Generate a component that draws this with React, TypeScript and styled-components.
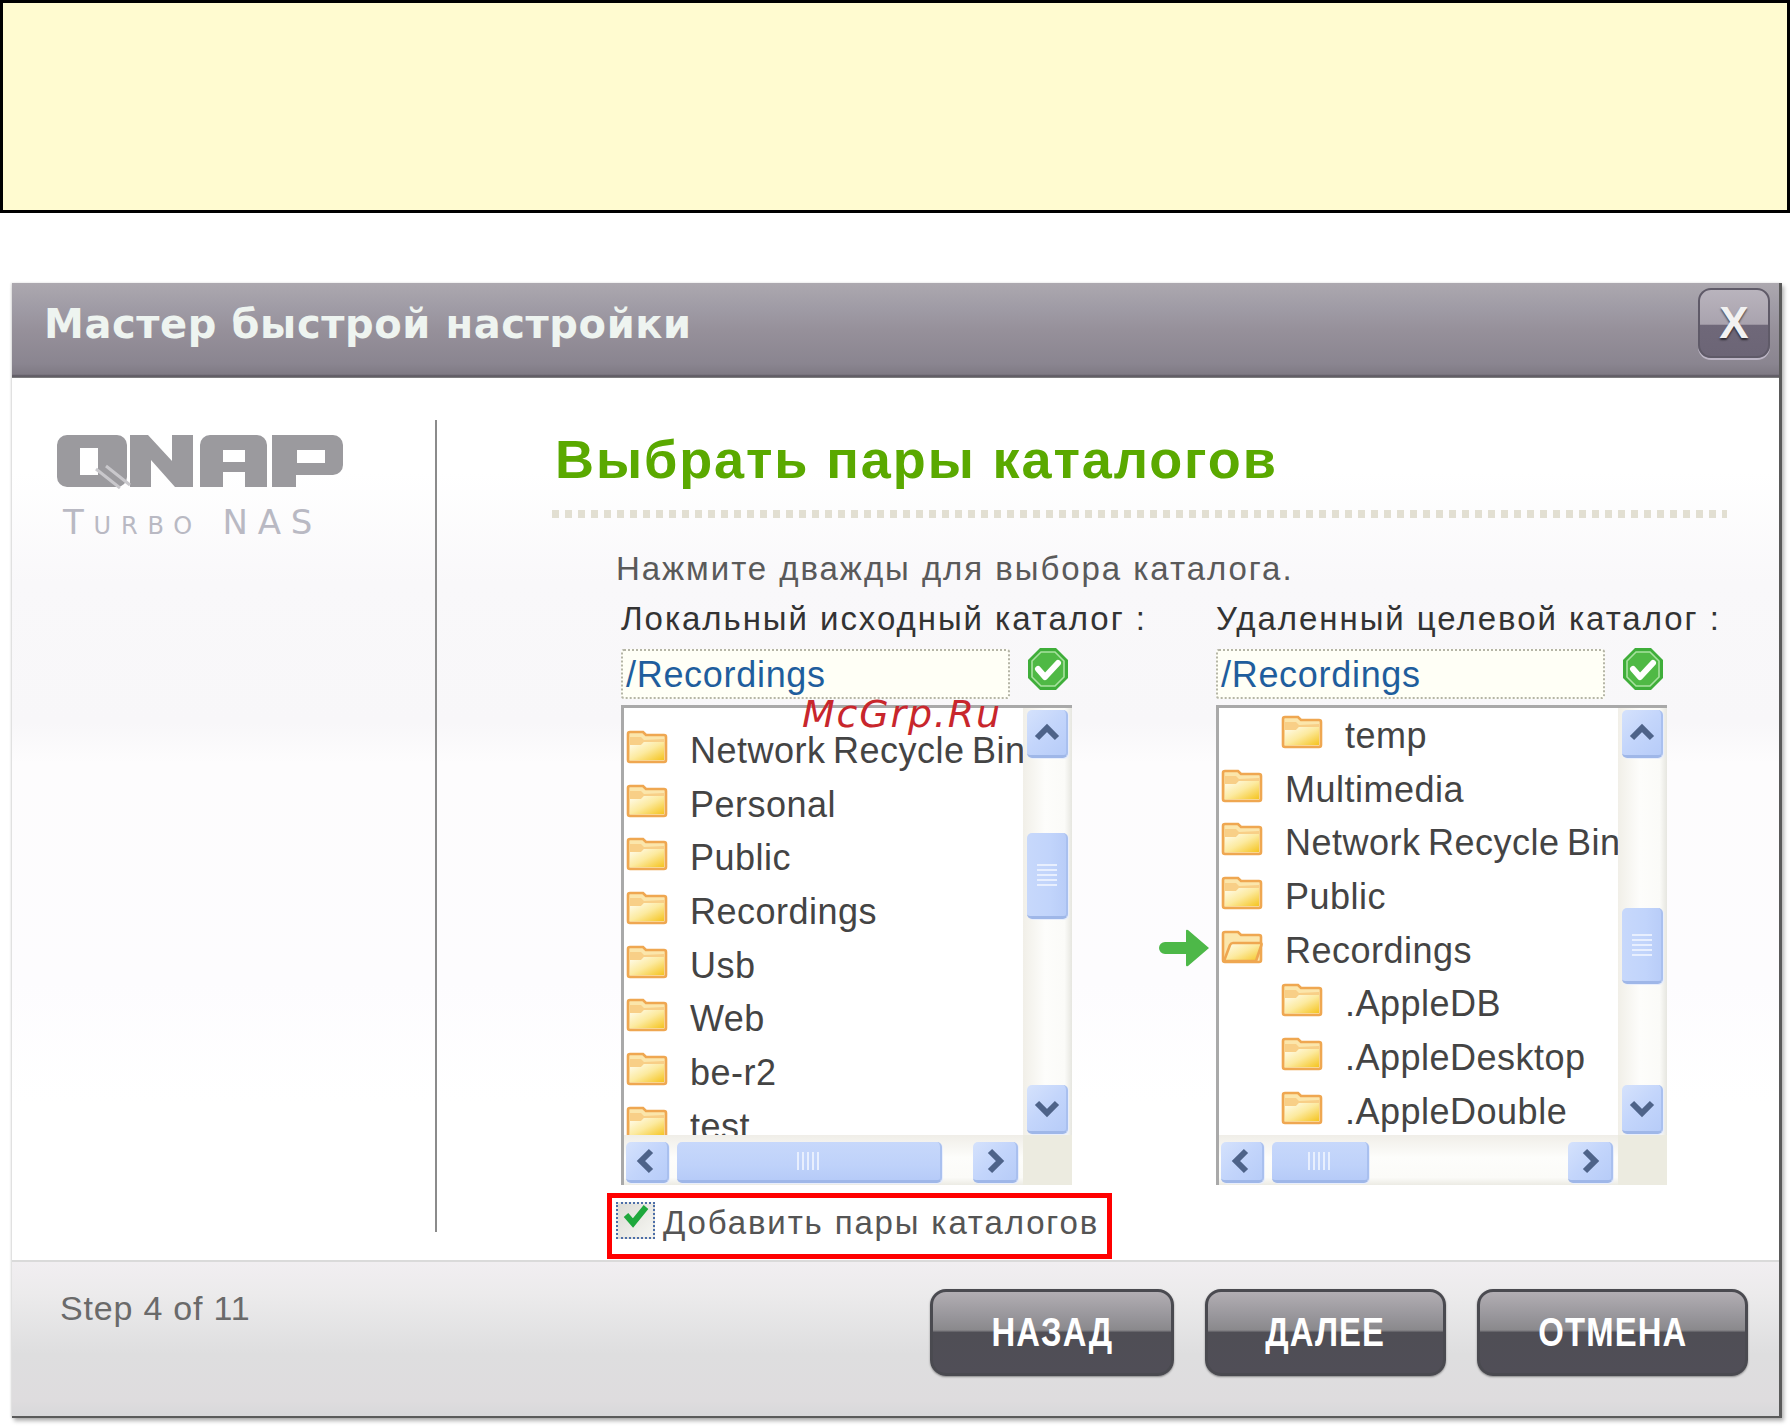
import React from "react";
import styled, { createGlobalStyle } from "styled-components";

const Global = createGlobalStyle`
  html, body { margin: 0; padding: 0; background: #fff; }
  body { font-family: "Liberation Sans", Arial, sans-serif; }
  #root { width: 1790px; height: 1427px; overflow: hidden; }
`;

const Page = styled.div`
  position: relative;
  width: 1790px;
  height: 1427px;
`;

const Note = styled.div`
  box-sizing: border-box;
  height: 213px;
  background: #fffbd0;
  border: 3px solid #000;
  margin-bottom: 70px;
`;

const Dialog = styled.div`
  box-sizing: border-box;
  margin: 0 8px 0 12px;
  height: 1135px;
  display: flex;
  flex-direction: column;
  border-right: 3px solid #5a5a5a;
  border-bottom: 2px solid #5a5a5a;
  box-shadow: 2px 3px 4px rgba(0, 0, 0, 0.3), -1px 0 2px rgba(0, 0, 0, 0.12);
  background: linear-gradient(
    180deg,
    #fff 0,
    #fff 190px,
    #f9f8fa 300px,
    #f8f7f9 440px,
    #fdfcfd 480px,
    #fdfcfe 700px,
    #fff 820px
  );
`;

const TitleBar = styled.div`
  box-sizing: border-box;
  height: 95px;
  flex: none;
  display: flex;
  align-items: center;
  justify-content: space-between;
  padding: 0 9px 0 32px;
  background: linear-gradient(180deg, #aca8af 0, #a09ca6 25%, #96909a 50%, #8a8590 85%, #7f7a84 96%, #57535c 98%, #8a8a8a 100%);
`;

const Title = styled.h1`
  margin: 0 0 14px;
  font-family: "DejaVu Sans", sans-serif;
  font-weight: 700;
  font-size: 40px;
  letter-spacing: 0.6px;
  color: #eef4f0;
  white-space: nowrap;
`;

const CloseButton = styled.button`
  box-sizing: border-box;
  width: 72px;
  height: 70px;
  margin-top: -15px;
  padding: 0;
  border: 2px solid #5f5a68;
  border-radius: 13px;
  background: linear-gradient(180deg, #b9b4bd 0, #a9a3ae 52%, #6f6879 53%, #6c6576 100%);
  box-shadow: 0 2px 0 #bdb6c6;
  color: #f2f2f2;
  font-family: "Liberation Sans", sans-serif;
  font-weight: 700;
  font-size: 44px;
  line-height: 1;
  text-shadow: 0 2px 2px rgba(0, 0, 0, 0.6);
`;

const Body = styled.div`
  flex: 1;
  min-height: 0;
  display: flex;
  padding-top: 42px;
`;

const Sidebar = styled.aside`
  box-sizing: border-box;
  width: 423px;
  flex: none;
  padding: 15px 0 0 44px;
`;

const LogoText = styled.div`
  margin: 16px 0 0 7px;
  font-family: "DejaVu Sans", sans-serif;
  font-size: 34px;
  line-height: 34px;
  letter-spacing: 9.8px;
  color: #b9b9c3;
  white-space: nowrap;
  font-variant: small-caps;
`;

const Divider = styled.div`
  flex: none;
  width: 2px;
  height: 812px;
  background: #8b8b8b;
`;

const Content = styled.main`
  flex: 1;
  min-width: 0;
  padding: 11px 0 0 118px;
`;

const Heading = styled.h2`
  margin: 0;
  height: 60px;
  line-height: 56px;
  font-family: "Liberation Sans", sans-serif;
  font-weight: 700;
  font-size: 54px;
  letter-spacing: 1.9px;
  color: #5aa900;
  white-space: nowrap;
`;

const DottedRule = styled.div`
  height: 8px;
  margin: 19px 52px 31px -3px;
  background: repeating-linear-gradient(90deg, #e2dfd2 0, #e2dfd2 7px, transparent 7px, transparent 13px);
`;

const Inner = styled.div`
  padding-left: 61px;
`;

const Hint = styled.p`
  margin: 0;
  height: 40px;
  line-height: 40px;
  font-size: 33px;
  letter-spacing: 1.95px;
  color: #5a5a5a;
  white-space: nowrap;
`;

const Pairs = styled.div`
  display: grid;
  grid-template-columns: 451px 144px 451px;
  grid-template-rows: 55px 56px 480px;
  margin: 5px 0 0 5px;
`;

const FieldLabel = styled.div`
  line-height: 50px;
  font-size: 33px;
  letter-spacing: 1.95px;
  color: #333;
  white-space: nowrap;
`;

const PathRow = styled.div`
  grid-column: ${(p: { $col: number }) => p.$col};
  display: flex;
  align-items: flex-start;
  gap: 17px;
`;

const PathField = styled.div`
  box-sizing: border-box;
  width: 389px;
  height: 50px;
  padding-left: 3px;
  border: 2px dotted #b5b5a6;
  border-radius: 3px;
  background: #fffff6;
  line-height: 47px;
  font-size: 36px;
  letter-spacing: 0.7px;
  color: #1f5e9d;
`;

const ListBox = styled.div`
  box-sizing: border-box;
  height: 480px;
  display: grid;
  grid-template-columns: 1fr 49px;
  grid-template-rows: 1fr 50px;
  border-top: 3px solid #a9a9a9;
  border-left: 3px solid #a9a9a9;
  background: #fff;
`;

const Viewport = styled.div`
  overflow: hidden;
  min-width: 0;
`;

const Rows = styled.ul<{ $offset: number }>`
  list-style: none;
  margin: ${(p) => p.$offset}px 0 0;
  padding: 0;
`;

const Row = styled.li<{ $depth: number }>`
  display: flex;
  align-items: center;
  gap: 22px;
  height: 53.7px;
  padding-left: ${(p) => 2 + p.$depth * 60}px;
  font-size: 36px;
  letter-spacing: 0.5px;
  word-spacing: -3px;
  color: #444;
  white-space: nowrap;
`;

const VTrack = styled.div`
  display: flex;
  flex-direction: column;
  align-items: center;
  padding: 2px 0 1px;
  background: linear-gradient(90deg, #f1efe8 0, #fdfdfb 45%, #fbfbf8 85%, #e6e6e0 100%);
`;

const HTrack = styled.div<{ $thumb: number; $rest: number }>`
  display: grid;
  grid-template-columns: 43px ${(p) => p.$thumb}px 45px;
  justify-content: start;
  align-items: center;
  padding: 4px 0 0 2px;
  background: linear-gradient(180deg, #f0eee8 0, #fdfdfb 45%, #fbfbf8 85%, #ecebe4 100%);
  & > :nth-child(2) { margin-left: 8px; width: calc(100% - 8px); }
  & > :nth-child(3) { margin-left: ${(p) => p.$rest}px; }
`;

const Corner = styled.div`
  background: #ecebe0;
`;

const ScrollButton = styled.div<{ $w: number; $h: number }>`
  box-sizing: border-box;
  flex: none;
  display: flex;
  align-items: center;
  justify-content: center;
  width: ${(p) => p.$w}px;
  height: ${(p) => p.$h}px;
  border-radius: 5px;
  border-right: 2px solid #a9c0ef;
  border-bottom: 3px solid #9fb7e8;
  background: linear-gradient(135deg, #d5e2fc 0, #c3d5fb 50%, #b7ccf8 100%);
  box-shadow: 1px 1px 0 #e8eefc;
`;

const VSpace = styled.div`
  flex: 1;
  width: 100%;
  display: flex;
  flex-direction: column;
  align-items: center;
`;

const VThumb = styled(ScrollButton)<{ $top: number }>`
  margin-top: ${(p) => p.$top}px;
  background: linear-gradient(90deg, #c7d8fb 0, #c1d4fb 60%, #b9cdf8 100%);
`;

const HThumb = styled(ScrollButton)`
  background: linear-gradient(180deg, #c7d8fb 0, #bfd2fa 60%, #b6cbf8 100%);
`;

const Grip = styled.svg`
  display: block;
`;

const FolderIcon = styled.svg`
  flex: none;
  margin-top: -8px;
`;

const BadgeIcon = styled.svg`
  flex: none;
  margin-top: -2px;
`;

const ArrowCell = styled.div`
  justify-self: end;
  align-self: start;
  margin: 223px 5px 0 0;
`;

const ArrowIcon = styled.svg`
  display: block;
`;

const LogoIcon = styled.svg`
  display: block;
`;

const CheckRow = styled.label`
  box-sizing: border-box;
  display: flex;
  align-items: center;
  gap: 8px;
  width: 505px;
  height: 66px;
  margin: 8px 0 0 -9px;
  padding: 0 0 6px 8px;
  border: 5px solid #f00;
  font-size: 33px;
  letter-spacing: 1.85px;
  color: #555;
  white-space: nowrap;
`;

const CheckBox = styled.span`
  box-sizing: border-box;
  flex: none;
  display: flex;
  align-items: flex-start;
  justify-content: center;
  width: 39px;
  height: 37px;
  margin-top: -6px;
  margin-left: -4px;
  border: 2px dotted #4c6ea8;
  background: linear-gradient(135deg, #dcdcd6, #f6f6f2);
`;

const Footer = styled.footer`
  box-sizing: border-box;
  height: 156px;
  flex: none;
  display: flex;
  align-items: flex-start;
  padding: 27px 31px 0 48px;
  border-top: 2px solid #dadada;
  background: linear-gradient(180deg, #f1eef1 0, #ecebec 20%, #dededf 60%, #dedcde 90%, #d8d8da 100%);
`;

const StepText = styled.div`
  margin-top: -1px;
  flex: 1;
  font-size: 34px;
  line-height: 40px;
  letter-spacing: 0.8px;
  color: #6a6a6a;
`;

const NavButton = styled.button<{ $w: number; $ml: number }>`
  box-sizing: border-box;
  width: ${(p) => p.$w}px;
  height: 87px;
  margin-left: ${(p) => p.$ml}px;
  padding: 0;
  border: 3px solid #4a4a50;
  border-radius: 16px;
  background: linear-gradient(180deg, #b2aeb3 0, #98969b 30%, #8a898c 47%, #4f4e55 50%, #504e57 100%);
  box-shadow: 0 1px 2px #888;
  color: #fff;
  font-family: "Liberation Sans", sans-serif;
  font-weight: 700;
  font-size: 40px;
  letter-spacing: 1.4px;
`;

const NavLabel = styled.span`
  display: inline-block;
  transform: scaleX(0.82);
`;

const Watermark = styled.div`
  position: absolute;
  left: 802px;
  top: 691px;
  font-family: "DejaVu Sans", sans-serif;
  font-style: oblique;
  font-size: 38px;
  line-height: 46px;
  letter-spacing: 1.8px;
  color: #c8262c;
  white-space: nowrap;
`;

const Folder: React.FC<{ open?: boolean }> = ({ open }) => (
  <FolderIcon width="42" height="34" viewBox="0 0 42 34">
    <defs>
      <linearGradient id="foldFront" x1="0" y1="0" x2="1" y2="1">
        <stop offset="0" stopColor="#fffdf0" />
        <stop offset="0.5" stopColor="#fcea9f" />
        <stop offset="1" stopColor="#f5c41f" />
      </linearGradient>
    </defs>
    <path d="M2 30V4a2 2 0 0 1 2-2h13l3 3h18a2 2 0 0 1 2 2v23a2 2 0 0 1-2 2H4a2 2 0 0 1-2-2z" fill="#fbe6ab" stroke="#efa751" strokeWidth="2.6" />
    {open ? (
      <path d="M3 31l6-16q1-2 3-2h27q2 0 1.4 2L35 31z" fill="url(#foldFront)" stroke="#efa751" strokeWidth="2.6" strokeLinejoin="round" />
    ) : (
      <>
        <path d="M4 7h11l3 3 20-1v3H18l-3 3H4z" fill="#f8cf87" />
        <path d="M4 15h11l3-3h20v18H4z" fill="url(#foldFront)" />
      </>
    )}
  </FolderIcon>
);

const OkBadge = () => (
  <BadgeIcon width="42" height="44" viewBox="0 0 42 44">
    <path d="M13 1h16l12 12v18L29 43H13L1 31V13z" fill="#3fae3a" />
    <path d="M14 5h14l9 9v16l-9 9H14l-9-9V14z" fill="#4fb945" stroke="#a9e2a0" strokeWidth="1.6" />
    <path d="M11 22l7 8 13-14" fill="none" stroke="#fff" strokeWidth="6" strokeLinecap="round" strokeLinejoin="round" />
  </BadgeIcon>
);

const Chevron: React.FC<{ dir: "up" | "down" | "left" | "right" }> = ({ dir }) => {
  const d = { up: "M3 15L13 5l10 10", down: "M3 5l10 10L23 5", left: "M15 3L5 13l10 10", right: "M6 3l10 10L6 23" }[dir];
  const vertical = dir === "up" || dir === "down";
  return (
    <svg width={vertical ? 26 : 21} height={vertical ? 20 : 26} viewBox={vertical ? "0 0 26 20" : "0 0 21 26"}>
      <path d={d} fill="none" stroke="#4e6389" strokeWidth="6" />
    </svg>
  );
};

const HGrip = () => (
  <Grip width="24" height="18" viewBox="0 0 24 18">
    <path d="M1 0v18M6 0v18M11 0v18M16 0v18M21 0v18" stroke="#e8effe" strokeWidth="2" />
  </Grip>
);

const VGrip = () => (
  <Grip width="20" height="22" viewBox="0 0 20 22">
    <path d="M0 1h20M0 6h20M0 11h20M0 16h20M0 21h20" stroke="#e8effe" strokeWidth="2" />
  </Grip>
);

const Arrow = () => (
  <ArrowIcon width="52" height="40" viewBox="0 0 52 40">
    <path d="M6 14h21V3q0-2 2-1l21 18-21 18q-2 1-2-1V26H6a6 6 0 0 1 0-12z" fill="#4db848" />
  </ArrowIcon>
);

type Item = { name: string; depth: number; open?: boolean };

const leftItems: Item[] = ["Network Recycle Bin", "Personal", "Public", "Recordings", "Usb", "Web", "be-r2", "test"].map((name) => ({ name, depth: 0 }));
const rightItems: Item[] = [
  { name: "temp", depth: 1 },
  { name: "Multimedia", depth: 0 },
  { name: "Network Recycle Bin", depth: 0 },
  { name: "Public", depth: 0 },
  { name: "Recordings", depth: 0, open: true },
  { name: ".AppleDB", depth: 1 },
  { name: ".AppleDesktop", depth: 1 },
  { name: ".AppleDouble", depth: 1 },
];

const TreeList: React.FC<{
  items: Item[];
  offset: number;
  vTop: number;
  vHeight: number;
  hThumb: number;
  hRest: number;
}> = ({ items, offset, vTop, vHeight, hThumb, hRest }) => (
  <ListBox>
    <Viewport>
      <Rows $offset={offset}>
        {items.map((it) => (
          <Row key={it.name} $depth={it.depth}>
            <Folder open={it.open} />
            <span>{it.name}</span>
          </Row>
        ))}
      </Rows>
    </Viewport>
    <VTrack>
      <ScrollButton $w={41} $h={48}><Chevron dir="up" /></ScrollButton>
      <VSpace>
        <VThumb $w={41} $h={vHeight} $top={vTop}><VGrip /></VThumb>
      </VSpace>
      <ScrollButton $w={41} $h={49}><Chevron dir="down" /></ScrollButton>
    </VTrack>
    <HTrack $thumb={hThumb} $rest={hRest}>
      <ScrollButton $w={43} $h={41}><Chevron dir="left" /></ScrollButton>
      <HThumb $w={hThumb - 8} $h={41}><HGrip /></HThumb>
      <ScrollButton $w={45} $h={41}><Chevron dir="right" /></ScrollButton>
    </HTrack>
    <Corner />
  </ListBox>
);

const QnapLogo = () => (
  <LogoIcon width="289" height="54" viewBox="0 0 289 54">
    <g fill="#9b9a9e" fillRule="evenodd">
      <path d="M11 0h50a10 10 0 0 1 10 10v32a10 10 0 0 1-10 10H11a10 10 0 0 1-10-10V10a10 10 0 0 1 10-10zM24 13v27h18V13z" />
      <path d="M74 52V0h18l24 26V0h21v52h-18L95 25v27z" />
      <path d="M154 0h47a10 10 0 0 1 10 10v42h-22V37h-22v15h-23V10a10 10 0 0 1 10-10zM167 15v12h22V15z" />
      <path d="M216 52V0h61a10 10 0 0 1 10 10v20a10 10 0 0 1-10 10h-37v12zM241 15v13h28V15z" />
    </g>
    <path d="M40 34l24 19M50 31l24 19" stroke="#c9c8cc" strokeWidth="3" fill="none" />
  </LogoIcon>
);

export default function App() {
  return (
    <Page>
      <Global />
      <Note />
      <Dialog>
        <TitleBar>
          <Title>Мастер быстрой настройки</Title>
          <CloseButton>X</CloseButton>
        </TitleBar>
        <Body>
          <Sidebar>
            <QnapLogo />
            <LogoText>Turbo NAS</LogoText>
          </Sidebar>
          <Divider />
          <Content>
            <Heading>Выбрать пары каталогов</Heading>
            <DottedRule />
            <Inner>
              <Hint>Нажмите дважды для выбора каталога.</Hint>
              <Pairs>
                <FieldLabel>Локальный исходный каталог :</FieldLabel>
                <span />
                <FieldLabel>Удаленный целевой каталог :</FieldLabel>
                <PathRow $col={1}>
                  <PathField>/Recordings</PathField>
                  <OkBadge />
                </PathRow>
                <span />
                <PathRow $col={3}>
                  <PathField>/Recordings</PathField>
                  <OkBadge />
                </PathRow>
                <TreeList items={leftItems} offset={16} vTop={75} vHeight={86} hThumb={273} hRest={31} />
                <ArrowCell><Arrow /></ArrowCell>
                <TreeList items={rightItems} offset={1} vTop={150} vHeight={76} hThumb={105} hRest={199} />
              </Pairs>
              <CheckRow>
                <CheckBox>
                  <svg width="26" height="24" viewBox="0 0 26 24">
                    <path d="M3 11l7 8L23 3" fill="none" stroke="#1ea83c" strokeWidth="6" />
                  </svg>
                </CheckBox>
                Добавить пары каталогов
              </CheckRow>
            </Inner>
          </Content>
        </Body>
        <Footer>
          <StepText>Step 4 of 11</StepText>
          <NavButton $w={244} $ml={0}><NavLabel>НАЗАД</NavLabel></NavButton>
          <NavButton $w={241} $ml={31}><NavLabel>ДАЛЕЕ</NavLabel></NavButton>
          <NavButton $w={271} $ml={31}><NavLabel>ОТМЕНА</NavLabel></NavButton>
        </Footer>
      </Dialog>
      <Watermark>McGrp.Ru</Watermark>
    </Page>
  );
}
